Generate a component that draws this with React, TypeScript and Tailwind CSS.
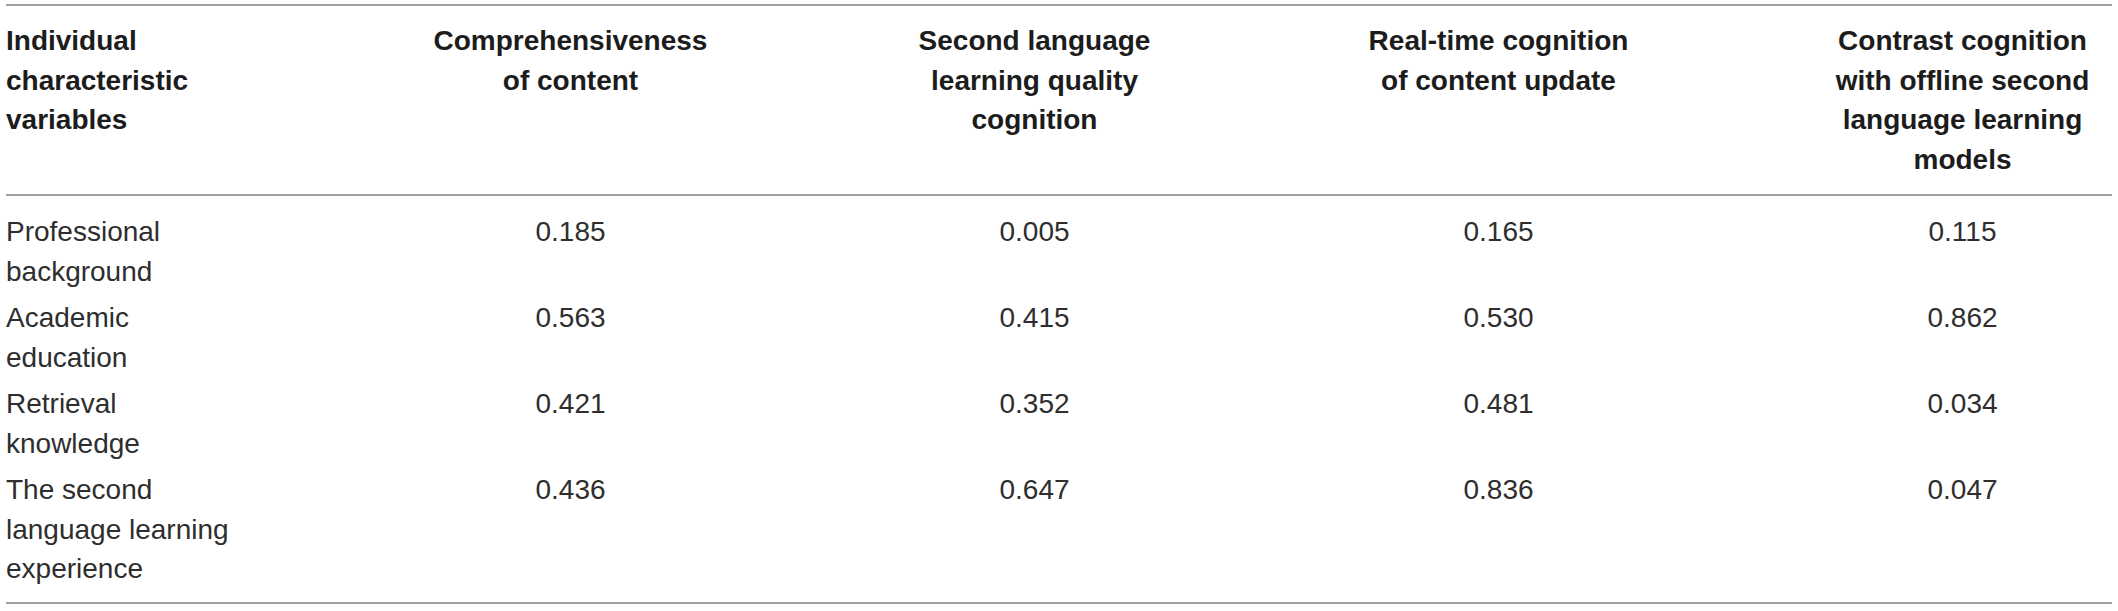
import React from "react";

const headers = [
  "Individual characteristic variables",
  "Comprehensiveness of content",
  "Second language learning quality cognition",
  "Real-time cognition of content update",
  "Contrast cognition with offline second language learning models",
];

const rows: string[][] = [
  ["Professional background", "0.185", "0.005", "0.165", "0.115"],
  ["Academic education", "0.563", "0.415", "0.530", "0.862"],
  ["Retrieval knowledge", "0.421", "0.352", "0.481", "0.034"],
  ["The second language learning experience", "0.436", "0.647", "0.836", "0.047"],
];

const grid =
  "grid grid-cols-[243px_285px_285px_285px_285px] gap-x-[179px] pr-[7px]";

export default function App() {
  return (
    <div className="w-[2118px] h-[611px] bg-white pt-[4px] px-[6px] font-['Liberation_Sans',Arial,sans-serif] text-[28px] leading-[39.5px]">
      <div className="border-t-2 border-b-2 border-[#a0a0a0]">
        <div className={`${grid} py-[15px] border-b-2 border-[#a0a0a0] font-bold text-[#1c1c1c]`}>
          {headers.map((h, i) => (
            <div key={i} className={i === 0 ? "text-left" : "text-center"}>
              {h}
            </div>
          ))}
        </div>
        <div className="flex flex-col gap-[7px] pt-[16px] pb-[13px] text-[#2e2e2e]">
          {rows.map((r, ri) => (
            <div key={ri} className={grid}>
              {r.map((c, ci) => (
                <div key={ci} className={ci === 0 ? "text-left" : "text-center"}>
                  {c}
                </div>
              ))}
            </div>
          ))}
        </div>
      </div>
    </div>
  );
}
